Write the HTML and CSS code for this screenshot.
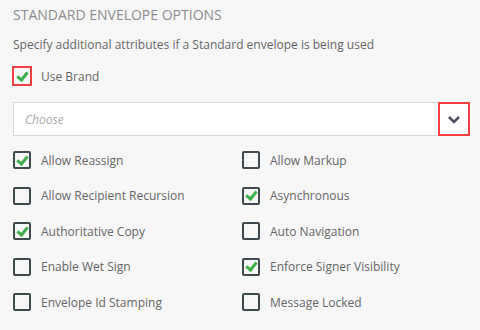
FILE: index.html
```html
<!DOCTYPE html>
<html lang="en">
<head>
    <meta charset="UTF-8">
    <title>Standard Envelope Options</title>
    <link rel="stylesheet" href="styles.css">
</head>
<body>
    <div class="panel">
        <h2 class="panel-title">STANDARD ENVELOPE OPTIONS</h2>
        <p class="panel-hint">Specify additional attributes if a Standard envelope is being used</p>

        <label class="option brand">
            <span class="box checked highlight"></span>
            <span>Use Brand</span>
        </label>

        <div class="select">
            <span class="placeholder">Choose</span>
            <span class="toggle highlight">
                <svg width="14" height="9" viewBox="0 0 14 9"><polyline points="2,2 7,7 12,2" fill="none" stroke="#4b5260" stroke-width="2.6"/></svg>
            </span>
        </div>

        <div class="options">
            <label class="option"><span class="box checked"></span><span>Allow Reassign</span></label>
            <label class="option"><span class="box"></span><span>Allow Markup</span></label>
            <label class="option"><span class="box"></span><span>Allow Recipient Recursion</span></label>
            <label class="option"><span class="box checked"></span><span>Asynchronous</span></label>
            <label class="option"><span class="box checked"></span><span>Authoritative Copy</span></label>
            <label class="option"><span class="box"></span><span>Auto Navigation</span></label>
            <label class="option"><span class="box"></span><span>Enable Wet Sign</span></label>
            <label class="option"><span class="box checked"></span><span>Enforce Signer Visibility</span></label>
            <label class="option"><span class="box"></span><span>Envelope Id Stamping</span></label>
            <label class="option"><span class="box"></span><span>Message Locked</span></label>
        </div>
    </div>
</body>
</html>
```

FILE: styles.css
```css
body {
    margin: 0;
    background-color: #f7f7f7;
    font-family: "Open Sans", "Liberation Sans", sans-serif;
    color: #666;
}

.panel {
    padding: 6px 10px 0 13px;
}

.panel-title {
    margin: 0;
    font-size: 14px;
    font-weight: normal;
    line-height: 18px;
    color: #8c8c8c;
}

.panel-hint {
    margin: 12px 0 0;
    font-size: 12px;
    line-height: 18px;
    color: #666;
}

.option {
    display: flex;
    align-items: center;
    gap: 10px;
    font-size: 12px;
    color: #666;
    height: 18px;
}

.brand {
    margin: 12px 0 0 -1px;
    height: 20px;
    gap: 9px;
}

.box {
    box-sizing: border-box;
    width: 18px;
    height: 18px;
    border: 2px solid #3f4a4f;
    border-radius: 2px;
    display: flex;
    align-items: center;
    justify-content: center;
    flex-shrink: 0;
}

.box.checked::after {
    content: "";
    width: 4px;
    height: 8px;
    margin-top: -2px;
    border-right: 3px solid #3fae49;
    border-bottom: 3px solid #3fae49;
    transform: rotate(40deg);
}

.box.highlight {
    width: 20px;
    height: 20px;
    border-color: #f04040;
    border-radius: 0;
}

.select {
    box-sizing: border-box;
    margin-top: 16px;
    width: 457px;
    height: 34px;
    background-color: #fff;
    border: 1px solid #d8d8d8;
    display: flex;
    align-items: center;
    justify-content: space-between;
}

.placeholder {
    padding-left: 11px;
    font-size: 12px;
    font-style: italic;
    color: #aaa;
}

.toggle {
    box-sizing: border-box;
    width: 32px;
    height: 34px;
    margin: 0 -1px 0 0;
    border: 2px solid #f04040;
    display: flex;
    align-items: center;
    justify-content: center;
}

.options {
    margin-top: 15px;
    display: grid;
    grid-template-columns: 229px 229px;
    grid-auto-rows: 35.5px;
}
```
